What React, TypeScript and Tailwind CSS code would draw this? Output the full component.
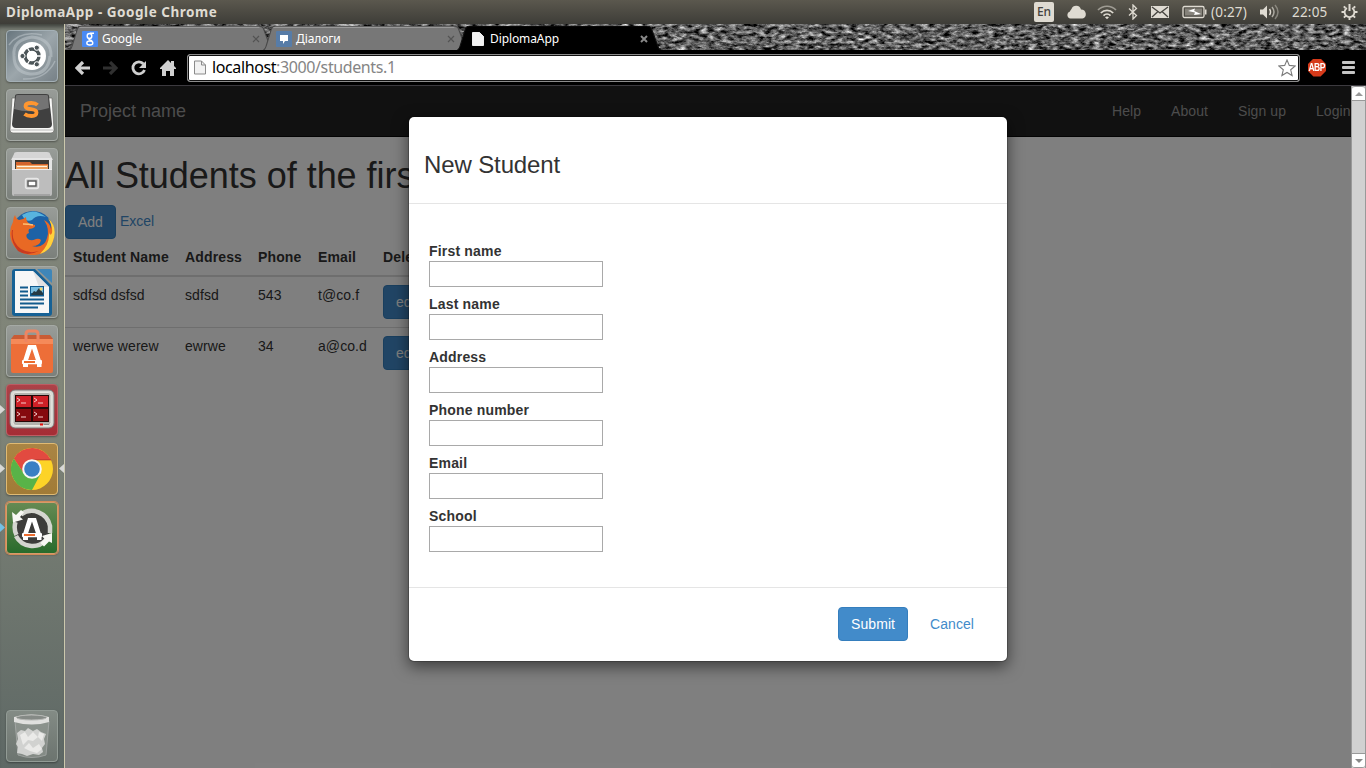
import React from "react";

const ui = "font-['Noto_Sans',sans-serif]";

function Knit({ id }: { id: string }) {
  return (
    <svg className="absolute inset-0 h-full w-full" aria-hidden="true">
      <filter id={id} x="0" y="0" width="100%" height="100%" colorInterpolationFilters="sRGB">
        <feTurbulence type="fractalNoise" baseFrequency="0.14 0.3" numOctaves="5" seed="8" />
        <feColorMatrix values="1.1 .8 0 0 -0.58  1.1 .8 0 0 -0.58  1.1 .8 0 0 -0.58  0 0 0 0 1" />
      </filter>
      <rect width="100%" height="100%" filter={`url(#${id})`} />
    </svg>
  );
}

function SystemBar() {
  const c = "#dfdbd2";
  return (
    <header className={`${ui} flex h-6 shrink-0 items-center bg-linear-to-b from-[#5b584e] to-[#3e3d38] pl-1.5 text-[#dfdbd2]`}>
      <span className="text-[13.5px] font-bold leading-6 tracking-[0.53px]">DiplomaApp - Google Chrome</span>
      <div className="ml-auto flex h-6 w-[332px] items-center">
        <span className="flex h-5 w-5 items-center justify-center rounded-xs bg-[#dfdbd2] text-[12px] font-medium text-[#45433e]">En</span>
        <svg className="ml-[13px] shrink-0" width="19" height="16" viewBox="0 0 19 16">
          <path fill={c} d="M3.500 14.500a3.600 3.600 0 0 1-.6-7A5.500 5.500 0 0 1 4.500 5 5 5 0 0 1 14 5.500a4.600 4.600 0 0 1 1.500 9z" />
        </svg>
        <svg className="ml-[11px] shrink-0" width="20" height="16" viewBox="0 0 20 16" fill="none" stroke={c} strokeWidth="1.7">
          <path d="M1 6c5-5 13-5 18 0" opacity=".55" /><path d="M3.8 9c3.5-3.5 9-3.5 12.400 0" /><path d="M6.500 11.700c2-2 5-2 7 0" />
          <path d="M8 13.300q2-1.500 4 0l-2 2z" fill={c} stroke="none" />
        </svg>
        <svg className="ml-[11px] shrink-0" width="10" height="16" viewBox="0 0 10 16" fill="none" stroke={c} strokeWidth="1.3"><path d="m1 4.500 7.500 7L5 15V1l3.500 3.500-7.500 7" /></svg>
        <svg className="ml-[13px] shrink-0" width="18" height="14" viewBox="0 0 18 14">
          <rect y="1" width="18" height="12" fill={c} /><path d="m1 2 8 6 8-6M1 12l6-5.500M17 12l-6-5.500" stroke="#45433e" strokeWidth="1.300" fill="none" />
        </svg>
        <svg className="ml-[13px] shrink-0" width="25" height="14" viewBox="0 0 25 14">
          <rect x="1" y="1.500" width="21" height="11" rx="1.500" fill="none" stroke={c} strokeWidth="1.300" /><rect x="3" y="3.500" width="17" height="7" fill="#85827a" /><rect x="23" y="4.500" width="1.500" height="5" fill={c} /><path d="m6 6 7-2.500-.8 2.500L19 9l-7 1 1-2.500z" fill="#fff" />
        </svg>
        <span className="ml-1 w-[37px] whitespace-nowrap text-[13.500px] leading-6 tracking-[0.180px]">(0:27)</span>
        <svg className="ml-[11px] shrink-0" width="21" height="18" viewBox="0 0 21 18" fill="none" stroke={c} strokeWidth="1.500">
          <path fill={c} stroke="none" d="M1 6.500h3l4-4v13l-4-4H1z" /><path d="M10.500 6q2 3 0 6" /><path d="M13 4q4 5 0 10" opacity=".65" /><path d="M16 2q6 7 0 14" opacity=".4" />
        </svg>
        <span className="ml-3 w-9 whitespace-nowrap text-[13.500px] leading-6 tracking-[0.200px]">22:05</span>
        <svg className="ml-[13px] shrink-0" width="17" height="18" viewBox="-8.500 -9 17 18" fill="none" stroke={c}>
          <path d="M-2.600-4A4.900 4.900 0 1 0 2.600-4" strokeWidth="1.800" /><path d="M0-8v7" strokeWidth="2" />
          <path d="M-5 0h-3M5 0h3M0 5v3M3.600 3.600l2 2M-3.600 3.600l-2 2M-4-4l-1.700-1.700M4-4l1.700-1.700" strokeWidth="1.900" />
        </svg>
      </div>
    </header>
  );
}

function Tile({ tone, children }: { tone: string; children: React.ReactNode }) {
  return (
    <div className={`h-[52px] w-[52px] shrink-0 overflow-hidden rounded-[4px] border shadow-[0_1px_2px_rgba(0,0,0,0.35)] ${tone}`}>
      <svg width="50" height="50" viewBox="1 1 50 50">{children}</svg>
    </div>
  );
}

const plain = "border-[#a5aaa5] bg-linear-to-b from-[#989c98] to-[#7b807b]";

function UbuntuIcon() {
  return (
    <>
      <g fill="none" stroke="#c3cbd0" opacity=".5">
        <path d="M8 26Q6 10 26 7q20 2 19 20M44 26q-2 19-20 18Q8 42 8 26" strokeWidth="3" />
        <path d="M3 15Q14 0 36 5M49 31Q40 50 17 49" strokeWidth="1.500" />
      </g>
      <circle cx="26" cy="26" r="14" fill="#fff" />
      <circle cx="26" cy="26" r="7" fill="none" stroke="#4c5558" strokeWidth="3.400" />
      <path d="M19 26h-4M29.500 20l2-3.500M29.500 32l2 3.500M26 26l9 0M26 26l-4.500-8M26 26l-4.500 8" stroke="#fff" strokeWidth="1.300" />
      <circle cx="26" cy="26" r="5" fill="#fff" />
      <g fill="#4c5558" stroke="#fff" strokeWidth="1"><circle cx="16.500" cy="26" r="2.600" /><circle cx="30.800" cy="17.700" r="2.600" /><circle cx="30.800" cy="34.300" r="2.600" /></g>
    </>
  );
}

function SublimeIcon() {
  return (
    <>
      <path d="M6 9h40l2 32q0 3-3 3H7q-3 0-3-3z" fill="#f7f7f5" stroke="#6b6b69" strokeWidth=".7" />
      <path d="M5 41h42" stroke="#b9b9b9" />
      <path d="M9 7q0-2 3-2h28q3 0 3 2l3 28q0 4-4 4H10q-4 0-4-4z" fill="#404040" />
      <path d="M10 7q0-1 2-1h28q2 0 2 1l1 12Q25 25 8 20z" fill="#858585" opacity=".75" />
      <path d="M31.500 16q-2-2-6-2-6 0-6 3.200 0 2.300 5.500 3t5.500 3.300q0 3.500-5 3.500-4.500 0-7-2" fill="none" stroke="#ff9630" strokeWidth="3.800" />
    </>
  );
}

function FilesIcon() {
  return (
    <>
      <path d="M8 6q0-2 3-2h30q3 0 3 2l3 6H5z" fill="#d5d5d5" /><path d="M6 10h40v12H6z" fill="#e4e4e4" />
      <path d="M9 12h34v10H9z" fill="#3e3932" /><path d="M10 14h14l2 2h16v6H10z" fill="#d4642c" /><path d="M10 17h32v6H10z" fill="#f0a15e" /><path d="M11 18.500h30" stroke="#fff2de" />
      <path d="M6 21h40v25q0 2-2 2H8q-2 0-2-2z" fill="#bdbdbd" /><path d="M6 21.500h40" stroke="#eee" /><path d="M8 47h36" stroke="#888" />
      <rect x="19.500" y="30.500" width="13" height="10" rx="2" fill="#c8c8c8" stroke="#e8e8e8" strokeWidth="1.400" /><rect x="22" y="33" width="8" height="5" fill="#fff" stroke="#555" strokeWidth="1.400" />
    </>
  );
}

function FirefoxIcon() {
  return (
    <>
      <circle cx="27" cy="25" r="21" fill="#1d62a6" /><path d="M16 8Q28 0 40 10q-9-3-14 3-6 3-10-5z" fill="#58b4df" />
      <path d="M42 11q7 7 6 16c0 13-10 21-21 21C14 48 4 39 4 26q0-6 3-11 0-4 2-7 1 4 4 5 4 0 7-3 0 5 4 7l5 1q1 3-6 4-1 2 0 4-4 1-2 5 3 4 9 1 3-1 5 1-1 6-9 6 12 3 15-8 3-9-3-18 6 3 7 9 1-6-3-11" fill="#e96924" />
      <path d="M42 11q10 9 5 23-3 10-13 13 10-10 9-22 1 5 3 1 1-7-4-15z" fill="#ffd13c" /><path d="M7 23Q5 35 15 42q8 5 18 2-12 6-21 0Q4 34 6 23z" fill="#c83a20" />
      <path d="M17 17q6 0 10 1" stroke="#ffc074" strokeWidth="1.500" fill="none" />
    </>
  );
}

function WriterIcon() {
  return (
    <>
      <path d="M9 3h20l17 17v27q0 3-3 3H9q-3 0-3-3V6q0-3 3-3z" fill="#166195" /><path d="M31 3h13q2 0 2 2v12z" fill="#3f86b8" />
      <path d="M9 5h18l16 16v26H9z" fill="#f7f7f7" /><path d="M27 5l16 16H33z" fill="#e2e2e2" />
      <path d="M14 21.500h8m-8 4h8m-8 4h8m-8 4h24m-24 4h24m-24 4h18" stroke="#125b8d" strokeWidth="1.900" />
      <rect x="24" y="20" width="14" height="10.500" fill="#125b8d" /><path d="M25 21h12v6H25z" fill="#79bde0" /><path d="m25 29 3-4 2 1 3-4 4 5v2z" fill="#263a44" /><circle cx="35" cy="23" r="1.500" fill="#f7d86c" />
    </>
  );
}

function LetterA() {
  return (
    <>
      <path d="M22 16h8l5.500 17.500h-4.800L26 19.500l-4.700 14h-4.800z" fill="#fff" />
      <rect x="16" y="31" width="20" height="4.200" rx="1" fill="#fff" />
      <path d="M17 35h5v3h-5zM31 35h4.500v3H31z" fill="#fff" />
      <path d="M18 33.100h11" stroke="#ec6c2e" strokeWidth="2" />
    </>
  );
}

function SoftwareIcon() {
  return (
    <>
      <path d="M5 15h42v31q0 2-2 2H7q-2 0-2-2z" fill="#ed6e38" /><path d="M5 14h42v5H5z" fill="#f58a59" /><path d="M8 10h36l3 4H5z" fill="#c95c35" />
      <path d="M20 17V9q0-3 3-3h6q3 0 3 3v8" fill="none" stroke="#ee8562" strokeWidth="3" />
      <g transform="translate(0 4)"><LetterA /></g>
    </>
  );
}

function TerminatorIcon() {
  return (
    <>
      <rect x="4" y="6" width="44" height="38" rx="5" fill="#d9d9d4" stroke="#777" /><rect x="7" y="8.500" width="38" height="33" rx="3" fill="#b2b2ad" stroke="#e8e8e2" />
      <rect x="9" y="11" width="34" height="27" fill="#260808" /><path d="M10 12h15v11H10zm17 0h15v11H27z" fill="#cf2027" /><path d="M10 25h15v12H10zm17 0h15v12H27z" fill="#850a0e" />
      <path d="m11 14 3 2-3 2m4 1h5m8-5 3 2-3 2m4 1h5M11 28l3 2-3 2m4 1h5m8-5 3 2-3 2m4 1h5" fill="none" stroke="#f4cccc" strokeWidth="1" /><path d="M34 40.500h3" stroke="#e30d0d" strokeWidth="2" /><path d="M38 40.500h5" stroke="#888" />
    </>
  );
}

function ChromeIcon() {
  return (
    <>
      <circle cx="26" cy="26" r="21" fill="#fdd327" /><path d="M7.800 15.500A21 21 0 0 1 45 17H26L17.500 30z" fill="#e24a40" />
      <path d="M7.800 15.500A21 21 0 0 0 26 47l8.500-16-17-1z" fill="#58b348" /><path d="M26 16.800h19" stroke="#bb392f" /><circle cx="26" cy="26" r="9.800" fill="#f7f7f5" /><circle cx="26" cy="26" r="7.800" fill="#397fc4" />
    </>
  );
}

function UpdaterIcon() {
  return (
    <>
      <circle cx="26" cy="26" r="18" fill="#3d3d3b" />
      <path d="M10.500 33A17.500 17.500 0 0 1 9.500 20M15 12.500A18.500 18.500 0 0 1 44 24v7M40 38A18.500 18.500 0 0 1 10 34" fill="none" stroke="#d4d5cf" strokeWidth="4.500" />
      <path d="m6 10 1 10.500 10-3-3-2.500 4-4.500-3-2.500-5 5zM46 41V31l-10 3 2.500 3-4 4 3.500 3.500 5-5z" fill="#f8f8f4" />
      <LetterA />
    </>
  );
}

function TrashIcon() {
  return (
    <>
      <path d="m9 11 3 34q14 5 28 0l3-34" fill="#9a9f9a" stroke="#c8c8c8" opacity=".5" />
      <path d="m11 23 4-3 4 1 3-3 5 3 4-2 4 3 5 2-2 5 1 5-3 4 1 4-4 3-6-1-6 2-5-2-5-1 1-6-2-3 2-5z" fill="#d1d2d0" />
      <path d="m14 25 5-3 3 5 5-5 5 5-5 4-5-1-5 5zM18 38l5-5 4 5 6-4 3 5-5 4-7-2zM33 22l5 2-2 7-4-4z" fill="#eaeae8" />
      <path d="M8 7q17-5 35 0v5q-17 5-35 0z" fill="#e0e0de" /><ellipse cx="25.500" cy="7.500" rx="15" ry="2.500" fill="#858a86" stroke="#b6b8b5" />
    </>
  );
}

function Launcher() {
  const pips = [
    { y: "top-[380px]", side: "left-0", d: "M0 1v9l5-4.500z", c: "#d8d8d6" },
    { y: "top-[439px]", side: "left-0", d: "M0 1v9l5-4.500z", c: "#d8d8d6" },
    { y: "top-[439px]", side: "right-0", d: "M5 1v9L0 5.500z", c: "#d8d8d6" },
    { y: "top-[498px]", side: "left-0", d: "M0 1v9l5-4.500z", c: "#73c0e5" },
  ];
  return (
    <aside className="relative flex w-[65px] shrink-0 flex-col gap-[7px] border-r border-[#cbc8ad] bg-linear-to-b from-[#7b8077] via-[#818679] to-[#5e6865] pb-1.5 pl-1.5 pt-1.5 shadow-[inset_0_6px_4px_-3px_rgba(0,0,0,0.5)]">
      <Tile tone="border-[#a4b0b6] bg-linear-to-br from-[#68767e] via-[#9ca6ab] to-[#778187]"><UbuntuIcon /></Tile>
      <Tile tone={plain}><SublimeIcon /></Tile>
      <Tile tone={plain}><FilesIcon /></Tile>
      <Tile tone={plain}><FirefoxIcon /></Tile>
      <Tile tone={plain}><WriterIcon /></Tile>
      <Tile tone={plain}><SoftwareIcon /></Tile>
      <Tile tone="border-[#bd5c63] bg-linear-to-b from-[#ac4248] to-[#a52c35]"><TerminatorIcon /></Tile>
      <Tile tone="border-[#dfba73] bg-linear-to-b from-[#aa8544] to-[#a17b36]"><ChromeIcon /></Tile>
      <Tile tone="border-[#d59b6c] bg-linear-to-b from-[#658a53] to-[#286b2c] ring-1 ring-[#d48b57]"><UpdaterIcon /></Tile>
      <div className="mt-auto"><Tile tone="border-[#929b95] bg-linear-to-b from-[#838b85] to-[#6c746f]"><TrashIcon /></Tile></div>
      {pips.map((p, i) => <svg key={i} className={`absolute ${p.y} ${p.side}`} width="5" height="11"><path d={p.d} fill={p.c} /></svg>)}
    </aside>
  );
}

function PageIcon({ line = "#d5d5d5" }: { line?: string }) {
  return <><path d="M.5.500h7l4 4v9H.500z" fill="#f2f2f2" stroke={line} /><path d="M7.500.500v4h4" fill="none" stroke={line} /></>;
}

function BrowserTab({ width, label, active, children }: { width: string; label: string; active?: boolean; children: React.ReactNode }) {
  return (
    <div className={`relative flex h-[25px] shrink-0 items-center pl-[14px] ${width}`}>
      <svg className="absolute inset-0 h-full w-full" viewBox="0 0 200 25" preserveAspectRatio="none" aria-hidden="true">
        <path d="M0 25Q3 24 4 20L9 3Q10 0 13 0H184q4 0 5 3l6 17q1 4 5 5z" fill={active ? "#000" : "#777"} stroke={active ? "#111" : "#484848"} />
        {!active && <path d="M11 1.500h174" stroke="#999" />}
      </svg>
      <span className="relative flex h-4 w-4 items-center justify-center">{children}</span>
      <span className={`${ui} relative ml-1 text-[12px] leading-[25px] tracking-[-0.1px] text-white`}>{label}</span>
      <svg className={`absolute right-[15px] top-[9px] ${active ? "text-[#888]" : "text-[#535353]"}`} width="8" height="8" viewBox="0 0 8 8"><path d="m1 1 6 6m0-6L1 7" stroke="currentColor" strokeWidth={active ? 2 : 1.2} /></svg>
    </div>
  );
}

function TabStrip() {
  return (
    <div className="relative flex h-[26px] shrink-0 overflow-hidden bg-[#444] pl-[3px] pt-[2px]">
      <Knit id="knit" />
      <BrowserTab width="w-[207px]" label="Google">
        <svg width="16" height="16"><rect width="16" height="16" rx="1" fill="#4a8af4" /><g fill="none" stroke="#fff" strokeWidth="1.400"><ellipse cx="7.500" cy="5" rx="2.300" ry="2.500" /><ellipse cx="7.800" cy="12" rx="3" ry="2" /><path d="M12 2.200H8M8 7.500q-2 1 0 1.500 2 .5 2 1.500" /></g></svg>
      </BrowserTab>
      <div className="-ml-[13px]"><BrowserTab width="w-[208px]" label="Діалоги">
        <svg width="16" height="16"><rect width="16" height="16" rx="1" fill="#577ca7" /><path d="M4 4h8v6H9l-2 3v-3H4z" fill="#fff" /></svg>
      </BrowserTab></div>
      <div className="-ml-[14px]"><BrowserTab width="w-[207px]" label="DiplomaApp" active>
        <svg width="12" height="14"><PageIcon line="#eee" /></svg>
      </BrowserTab></div>
    </div>
  );
}

function Toolbar() {
  return (
    <div className="flex h-9 shrink-0 items-center border-b border-[#3c3a3f] bg-black pl-[10px]">
      <svg width="15" height="14" viewBox="0 0 15 14"><path d="M8 1 2 7l6 6M3 7h12" fill="none" stroke="#d0d0d0" strokeWidth="3.200" /></svg>
      <svg className="ml-[13px]" width="15" height="14" viewBox="0 0 15 14"><path d="m7 1 6 6-6 6m5-6H0" fill="none" stroke="#303030" strokeWidth="3.200" /></svg>
      <svg className="ml-[13px]" width="16" height="16" viewBox="0 0 16 16"><path d="M12.500 4A6 6 0 1 0 13.500 10" fill="none" stroke="#d0d0d0" strokeWidth="2.800" /><path d="M15 1v7H8z" fill="#d0d0d0" /></svg>
      <svg className="ml-[13px]" width="16" height="16" viewBox="0 0 16 16"><path d="m8 0 3 3V1h3v5l2 2v1h-2v7h-4v-5H6v5H2V9H0V8z" fill="#d0d0d0" /></svg>
      <div className="ml-[11px] flex h-7 w-[1113px] items-center rounded-[3px] border border-[#8c8c8c] bg-white pl-1.5 shadow-[inset_0_0_0_1px_#111]">
        <svg width="12" height="15" viewBox="0 0 12 14"><PageIcon line="#8b8b8b" /></svg>
        <span className={`${ui} ml-[6px] -mt-0.5 whitespace-nowrap text-[16px] leading-6 tracking-[-0.39px] text-[#858585]`}><span className="text-black">localhost</span>:3000/students.1</span>
        <svg className="ml-auto mr-[3px]" width="18" height="18" viewBox="0 0 18 18"><path d="m9 1 2.300 5.400 5.900.500-4.500 3.900 1.400 5.700L9 13.500l-5.100 3 1.400-5.700L.8 6.900l5.900-.500z" fill="#fff" stroke="#7b7b7b" strokeWidth="1.100" /></svg>
      </div>
      <span className="ml-[8px] flex h-[18px] w-[18px] items-center justify-center bg-[#d63a1a] [clip-path:polygon(30%_0,70%_0,100%_30%,100%_70%,70%_100%,30%_100%,0_70%,0_30%)]"><span className="inline-block scale-x-[0.85] font-['Liberation_Sans',sans-serif] text-[10px] font-bold tracking-[-0.6px] text-white">ABP</span></span>
      <div className="ml-[16px] flex w-[13px] flex-col gap-[2px]"><i className="h-[3px] rounded-[1px] bg-[#c4c4c4]" /><i className="h-[3px] rounded-[1px] bg-[#c4c4c4]" /><i className="h-[3px] rounded-[1px] bg-[#c4c4c4]" /></div>
    </div>
  );
}

const primary = "h-[34px] rounded-[4px] border border-[#357ebd] bg-[#428bca] px-3 text-sm leading-5 text-white";
const cols = "grid grid-cols-[112px_73px_60px_65px_1fr] px-2";

function StudentsPage() {
  const rows = [["sdfsd dsfsd", "sdfsd", "543", "t@co.f"], ["werwe werew", "ewrwe", "34", "a@co.d"]];
  return (
    <div className="flex h-full flex-col bg-white text-sm leading-5 text-[#333]">
      <nav className="flex h-[51px] shrink-0 items-center justify-between border-b border-[#080808] bg-[#222] pl-[15px] text-[#999]">
        <span className="text-lg">Project name</span>
        <div className="flex gap-[30px] whitespace-nowrap tracking-[0.08px]"><a className="w-[29px]">Help</a><a className="w-[37px]">About</a><a className="w-[48px]">Sign up</a><a className="w-[35px]">Login</a></div>
      </nav>
      <h1 className="mt-[19px] h-[39px] whitespace-nowrap text-[36px] leading-[39px] tracking-[-0.03px]">All Students of the first</h1>
      <div className="mt-2.5 flex h-[34px] gap-1"><button className={primary}>Add</button><a className="pt-1.5 text-[#428bca]">Excel</a></div>
      <section className="w-[500px]">
        <div className={`${cols} h-[38px] border-b-2 border-[#ddd] pt-2 font-bold tracking-[0.14px]`}><span>Student Name</span><span>Address</span><span>Phone</span><span>Email</span><span>Delete</span></div>
        {rows.map((r) => (
          <div key={r[0]} className={`${cols} h-[51px] border-b border-[#ddd] pt-2 tracking-[0.08px] last:border-b-0`}>
            {r.map((v) => <span key={v}>{v}</span>)}
            <div><button className={primary}>edit</button></div>
          </div>
        ))}
      </section>
    </div>
  );
}

function StudentDialog() {
  const fields = ["First name", "Last name", "Address", "Phone number", "Email", "School"];
  return (
    <div role="dialog" className="absolute left-[343px] top-[30px] flex h-[546px] w-[600px] flex-col rounded-[6px] border border-black/20 bg-white bg-clip-padding text-sm leading-5 text-[#333] shadow-[0_5px_15px_rgba(0,0,0,0.5)]">
      <div className="h-[87px] border-b border-[#e5e5e5] px-[15px] pt-[35px]"><h3 className="text-2xl leading-[26px] tracking-[-0.12px]">New Student</h3></div>
      <form className="flex flex-1 flex-col gap-[7px] px-5 pt-[37px]">
        {fields.map((f) => (
          <label key={f} className="flex h-[46px] w-[174px] flex-col font-bold tracking-[0.18px]">{f}<input className="h-[26px] w-full border border-[#a9a9a9] bg-white outline-none" /></label>
        ))}
      </form>
      <div className="flex h-[74px] justify-end gap-[9px] border-t border-[#e5e5e5] px-5 pt-[19px]">
        <button className={`${primary} w-[70px] tracking-[0.08px]`}>Submit</button><button className="h-[34px] w-[70px] tracking-[0.08px] text-[#428bca]">Cancel</button>
      </div>
    </div>
  );
}

function Scrollbar() {
  return (
    <div className="flex w-[15px] shrink-0 flex-col border-x border-[#999] bg-[#d1d1d1]">
      <div className="flex h-[15px] items-center justify-center rounded-t-[3px] border-y border-[#999] bg-white"><svg width="8" height="4"><path d="M0 4 4 0l4 4z" fill="#999" /></svg></div>
      <div className="mt-auto flex h-[15px] items-center justify-center rounded-b-[3px] border-y border-[#999] bg-white"><svg width="8" height="4"><path d="m0 0 4 4 4-4z" fill="#888" /></svg></div>
    </div>
  );
}

export default function App() {
  return (
    <div className="flex h-[768px] w-[1366px] flex-col overflow-hidden font-['Liberation_Sans',sans-serif]">
      <SystemBar />
      <div className="flex min-h-0 flex-1">
        <Launcher />
        <main className="flex min-w-0 flex-1 flex-col">
          <TabStrip />
          <Toolbar />
          <div className="flex min-h-0 flex-1">
            <div className="relative min-w-0 flex-1 overflow-hidden">
              <StudentsPage />
              <div className="absolute inset-0 bg-black/50" />
              <StudentDialog />
            </div>
            <Scrollbar />
          </div>
        </main>
      </div>
    </div>
  );
}
